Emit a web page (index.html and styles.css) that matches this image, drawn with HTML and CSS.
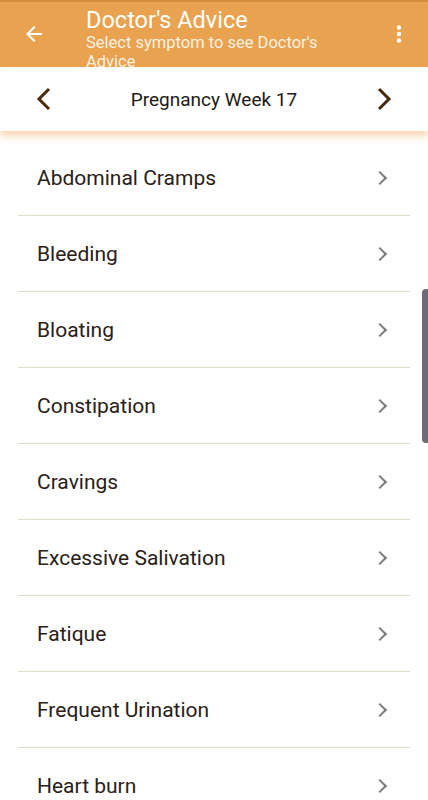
FILE: index.html
```html
<!DOCTYPE html>
<html lang="en">
<head>
    <meta charset="UTF-8">
    <meta name="viewport" content="width=device-width, initial-scale=1.0">
    <title>Doctor's Advice</title>
    <link rel="stylesheet" href="styles.css">
</head>
<body>
    <header class="topbar">
        <button class="icon-btn back">
            <svg width="24" height="24" viewBox="0 0 24 24"><path d="M20 11H7.83l5.59-5.59L12 4l-8 8 8 8 1.41-1.41L7.83 13H20v-2z" fill="#fff"/></svg>
        </button>
        <div class="titles">
            <h1>Doctor's Advice</h1>
            <p>Select symptom to see Doctor's Advice</p>
        </div>
        <button class="icon-btn more">
            <svg width="24" height="24" viewBox="0 0 24 24"><circle cx="12" cy="5.5" r="2.2" fill="#fff"/><circle cx="12" cy="12" r="2.2" fill="#fff"/><circle cx="12" cy="18.5" r="2.2" fill="#fff"/></svg>
        </button>
    </header>

    <div class="week-bar">
        <button class="week-nav">
            <svg width="16" height="24" viewBox="0 0 16 24"><path d="M13 2 L3 12 L13 22" fill="none" stroke="#4a2a0e" stroke-width="3"/></svg>
        </button>
        <span class="week-label">Pregnancy Week 17</span>
        <button class="week-nav">
            <svg width="16" height="24" viewBox="0 0 16 24"><path d="M3 2 L13 12 L3 22" fill="none" stroke="#4a2a0e" stroke-width="3"/></svg>
        </button>
    </div>

    <ul class="symptoms">
        <li>Abdominal Cramps<span class="chev"></span></li>
        <li>Bleeding<span class="chev"></span></li>
        <li>Bloating<span class="chev"></span></li>
        <li>Constipation<span class="chev"></span></li>
        <li>Cravings<span class="chev"></span></li>
        <li>Excessive Salivation<span class="chev"></span></li>
        <li>Fatique<span class="chev"></span></li>
        <li>Frequent Urination<span class="chev"></span></li>
        <li>Heart burn<span class="chev"></span></li>
    </ul>

    <div class="scrollbar"></div>
</body>
</html>
```

FILE: styles.css
```css
body {
    margin: 0;
    height: 800px;
    overflow: hidden;
    background: #fff;
    font-family: Roboto, "Noto Sans", sans-serif;
    position: relative;
}

.topbar {
    height: 67px;
    background: #e9a24f;
    border-top: 2px solid #d38d3e;
    box-sizing: border-box;
    display: flex;
    align-items: flex-start;
    overflow: hidden;
    color: #fff;
}

.icon-btn {
    background: none;
    border: none;
    padding: 0;
    display: flex;
    align-items: center;
    justify-content: center;
    height: 64px;
}

.back {
    width: 68px;
    margin-right: 18px;
}

.more {
    width: 58px;
    margin-left: auto;
}

.titles {
    padding-top: 5px;
    width: 270px;
}

.titles h1 {
    margin: 0;
    font-size: 23.5px;
    font-weight: 400;
    line-height: 26px;
}

.titles p {
    margin: 0;
    font-size: 16.5px;
    line-height: 19px;
    color: #fdf1e2;
}

.week-bar {
    height: 64px;
    display: flex;
    align-items: center;
    justify-content: space-between;
    padding: 0 36px 0 36px;
    background: #fff;
    box-shadow: 0 5px 7px rgba(240, 160, 80, 0.45);
    position: relative;
}

.week-nav {
    background: none;
    border: none;
    padding: 0;
    display: flex;
}

.week-label {
    font-size: 19px;
    color: #1e1a16;
}

.symptoms {
    list-style: none;
    margin: 9px 18px 0 18px;
    padding: 0;
}

.symptoms li {
    height: 75px;
    border-bottom: 1px solid #e2dccb;
    display: flex;
    align-items: center;
    justify-content: space-between;
    padding: 0 25px 0 19px;
    font-size: 21px;
    color: #2a2016;
}

.chev {
    width: 8px;
    height: 8px;
    border-right: 2px solid #7a7a7a;
    border-top: 2px solid #7a7a7a;
    transform: rotate(45deg);
}

.scrollbar {
    position: absolute;
    right: 0;
    top: 289px;
    width: 6px;
    height: 154px;
    background: #6d6b78;
    border-radius: 4px 0 0 4px;
}
```
